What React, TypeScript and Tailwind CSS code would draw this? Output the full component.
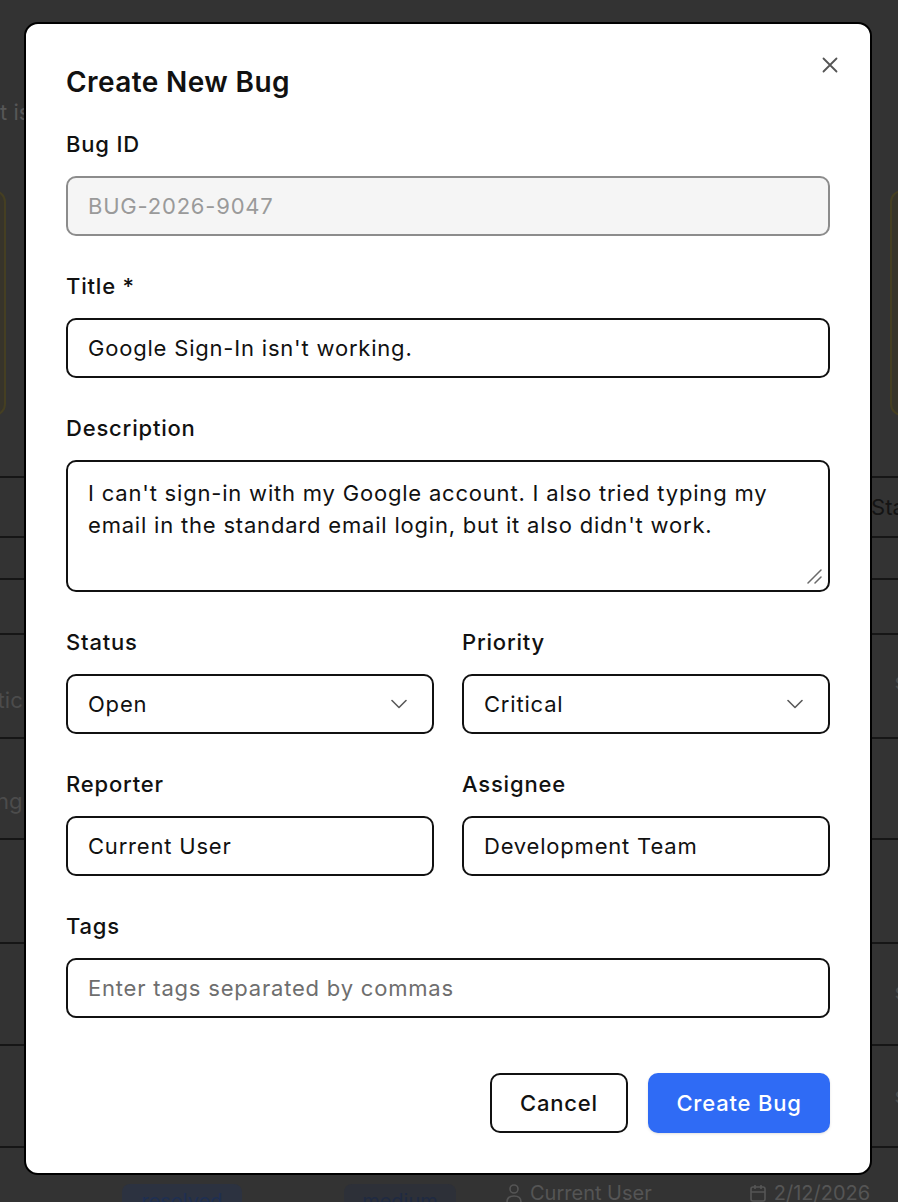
import { useState } from 'react';

const font = { fontFamily: 'Inter, "Noto Sans", sans-serif' };

function Chevron() {
  return (
    <svg
      width="16"
      height="10"
      viewBox="0 0 16 10"
      fill="none"
      className="pointer-events-none absolute right-[27px] top-1/2 -translate-y-1/2"
    >
      <path d="M1 1.5L8 8.5L15 1.5" stroke="#5a5a5a" strokeWidth="1.6" strokeLinecap="round" strokeLinejoin="round" />
    </svg>
  );
}

function Label({ children }: { children: React.ReactNode }) {
  return (
    <label className="mb-[18px] block h-[28px] text-[22px] leading-[28px] font-medium tracking-[0.8px] text-[#111]">
      {children}
    </label>
  );
}

const inputCls =
  'h-[60px] w-full rounded-[10px] border-2 border-[#111] bg-white px-[20px] text-[22px] tracking-[0.8px] text-[#111] outline-none placeholder:text-[#6e6e6e]';

export default function App() {
  const [title, setTitle] = useState("Google Sign-In isn't working.");
  const [desc, setDesc] = useState(
    "I can't sign-in with my Google account. I also tried typing my email in the standard email login, but it also didn't work."
  );
  const [status, setStatus] = useState('open');
  const [priority, setPriority] = useState('critical');
  const [reporter, setReporter] = useState('Current User');
  const [assignee, setAssignee] = useState('Development Team');
  const [tags, setTags] = useState('');

  return (
    <div className="relative h-[1202px] w-full overflow-hidden bg-[#333333]" style={font}>
      {/* dimmed page behind the dialog */}
      <div className="flex flex-col">
        <p className="mt-[98px] h-[28px] text-[22px] leading-[28px] text-[#575757]">t issues</p>
        <div className="mt-[64px] flex h-[226px] justify-between">
          <div className="-ml-[194px] w-[200px] rounded-xl border-2 border-[#453f22] bg-[#37342a]" />
          <div className="-mr-[192px] w-[200px] rounded-xl border-2 border-[#453f22] bg-[#37342a]" />
        </div>
        <div className="mt-[60px] flex flex-col border-t-2 border-[#161616]">
          <div className="flex h-[60px] items-center justify-end border-b-2 border-[#161616] text-[22px] text-[#141414]">
            <span className="-mr-[14px]">Stat</span>
          </div>
          <div className="h-[42px] border-b-2 border-[#161616]" />
          <div className="h-[55px] border-b-2 border-[#161616]" />
          <div className="flex h-[104px] items-center justify-between border-b-2 border-[#161616] text-[22px] text-[#4c4c4c]">
            <span className="-ml-[14px] mt-[28px]">stic</span>
            <span className="-mr-[8px] -mt-[10px]">s</span>
          </div>
          <div className="flex h-[101px] items-center border-b-2 border-[#161616] text-[22px] text-[#4c4c4c]">
            <span className="-ml-[4px] mt-[26px]">ng</span>
          </div>
          <div className="h-[104px] border-b-2 border-[#161616]" />
          <div className="flex h-[102px] items-center justify-end border-b-2 border-[#161616] text-[22px] text-[#4c4c4c]">
            <span className="-mr-[8px] -mt-[6px]">s</span>
          </div>
          <div className="flex h-[102px] items-center justify-end border-b-2 border-[#161616] text-[22px] text-[#4c4c4c]">
            <span className="-mr-[8px] -mt-[2px]">s</span>
          </div>
          <div className="flex h-[60px] items-end pl-[122px] text-[20px] text-[#555]">
            <span className="h-[24px] w-[120px] rounded-t-lg bg-[#2c3240] pt-[2px] text-center text-[#1e2f52]">resolved</span>
            <span className="ml-[102px] h-[24px] w-[112px] rounded-t-lg bg-[#2d3038] pt-[2px] text-center text-[#1f2a42]">medium</span>
            <span className="ml-[50px] flex items-center gap-[8px] pt-[8px]">
              <svg width="16" height="18" viewBox="0 0 16 18" fill="none">
                <circle cx="8" cy="5" r="4" stroke="#555" strokeWidth="1.6" />
                <path d="M1 18c0-4 3-6 7-6s7 2 7 6" stroke="#555" strokeWidth="1.6" />
              </svg>
              Current User
            </span>
            <span className="ml-[98px] flex items-center gap-[8px] pt-[8px]">
              <svg width="16" height="18" viewBox="0 0 16 18" fill="none">
                <rect x="1" y="3" width="14" height="14" rx="2" stroke="#555" strokeWidth="1.6" />
                <path d="M1 8h14M5 1v4M11 1v4" stroke="#555" strokeWidth="1.6" />
              </svg>
              2/12/2026
            </span>
          </div>
        </div>
      </div>

      {/* dialog */}
      <div className="absolute inset-0 flex justify-start pl-[24px] pt-[22px]">
        <div className="relative flex h-fit w-[848px] flex-col rounded-[14px] border-2 border-black bg-white p-[40px]">
          <button className="absolute right-[32px] top-[33px] p-0" aria-label="Close">
            <svg width="16" height="16" viewBox="0 0 16 16" fill="none">
              <path d="M1.5 1.5L14.5 14.5M14.5 1.5L1.5 14.5" stroke="#555" strokeWidth="1.8" strokeLinecap="round" />
            </svg>
          </button>

          <h2 className="h-[36px] text-[28px] leading-[36px] font-semibold tracking-[0.4px] text-[#111]">Create New Bug</h2>

          <div className="mt-[30px] flex flex-col gap-[36px]">
            <div>
              <Label>Bug ID</Label>
              <input
                value="BUG-2026-9047"
                disabled
                className="h-[60px] w-full rounded-[10px] border-2 border-[#8c8c8c] bg-[#f5f5f5] px-[20px] text-[22px] tracking-[0.8px] text-[#9a9a9a] outline-none"
              />
            </div>

            <div>
              <Label>Title *</Label>
              <input value={title} onChange={(e) => setTitle(e.target.value)} className={inputCls} />
            </div>

            <div>
              <Label>Description</Label>
              <div className="relative">
                <textarea
                  value={desc}
                  onChange={(e) => setDesc(e.target.value)}
                  className="block h-[132px] w-full resize-none rounded-[10px] border-2 border-[#111] bg-white px-[20px] py-[15px] text-[22px] leading-[32px] tracking-[0.8px] text-[#111] outline-none"
                />
                <svg
                  width="16"
                  height="16"
                  viewBox="0 0 16 16"
                  fill="none"
                  className="pointer-events-none absolute bottom-[8px] right-[8px]"
                >
                  <path d="M2 15L15 2M9 15L15 9" stroke="#6a6a6a" strokeWidth="1.5" strokeLinecap="round" />
                </svg>
              </div>
            </div>

            <div className="grid grid-cols-2 gap-x-[28px]">
              <div>
                <Label>Status</Label>
                <div className="relative">
                  <select
                    value={status}
                    onChange={(e) => setStatus(e.target.value)}
                    className={inputCls + ' appearance-none'}
                  >
                    <option value="open">Open</option>
                    <option value="in-progress">In Progress</option>
                    <option value="resolved">Resolved</option>
                    <option value="closed">Closed</option>
                  </select>
                  <Chevron />
                </div>
              </div>
              <div>
                <Label>Priority</Label>
                <div className="relative">
                  <select
                    value={priority}
                    onChange={(e) => setPriority(e.target.value)}
                    className={inputCls + ' appearance-none'}
                  >
                    <option value="low">Low</option>
                    <option value="medium">Medium</option>
                    <option value="high">High</option>
                    <option value="critical">Critical</option>
                  </select>
                  <Chevron />
                </div>
              </div>
            </div>

            <div className="grid grid-cols-2 gap-x-[28px]">
              <div>
                <Label>Reporter</Label>
                <input value={reporter} onChange={(e) => setReporter(e.target.value)} className={inputCls} />
              </div>
              <div>
                <Label>Assignee</Label>
                <input value={assignee} onChange={(e) => setAssignee(e.target.value)} className={inputCls} />
              </div>
            </div>

            <div>
              <Label>Tags</Label>
              <input
                value={tags}
                onChange={(e) => setTags(e.target.value)}
                placeholder="Enter tags separated by commas"
                className={inputCls}
              />
            </div>
          </div>

          <div className="mt-[55px] flex justify-end gap-[20px]">
            <button className="h-[60px] w-[138px] rounded-[10px] border-2 border-[#111] bg-white text-[22px] font-medium tracking-[0.8px] text-[#111]">
              Cancel
            </button>
            <button className="h-[60px] w-[182px] rounded-[10px] bg-[#2f6bf5] text-[22px] font-medium tracking-[0.8px] text-white shadow-sm">
              Create Bug
            </button>
          </div>
        </div>
      </div>
    </div>
  );
}
